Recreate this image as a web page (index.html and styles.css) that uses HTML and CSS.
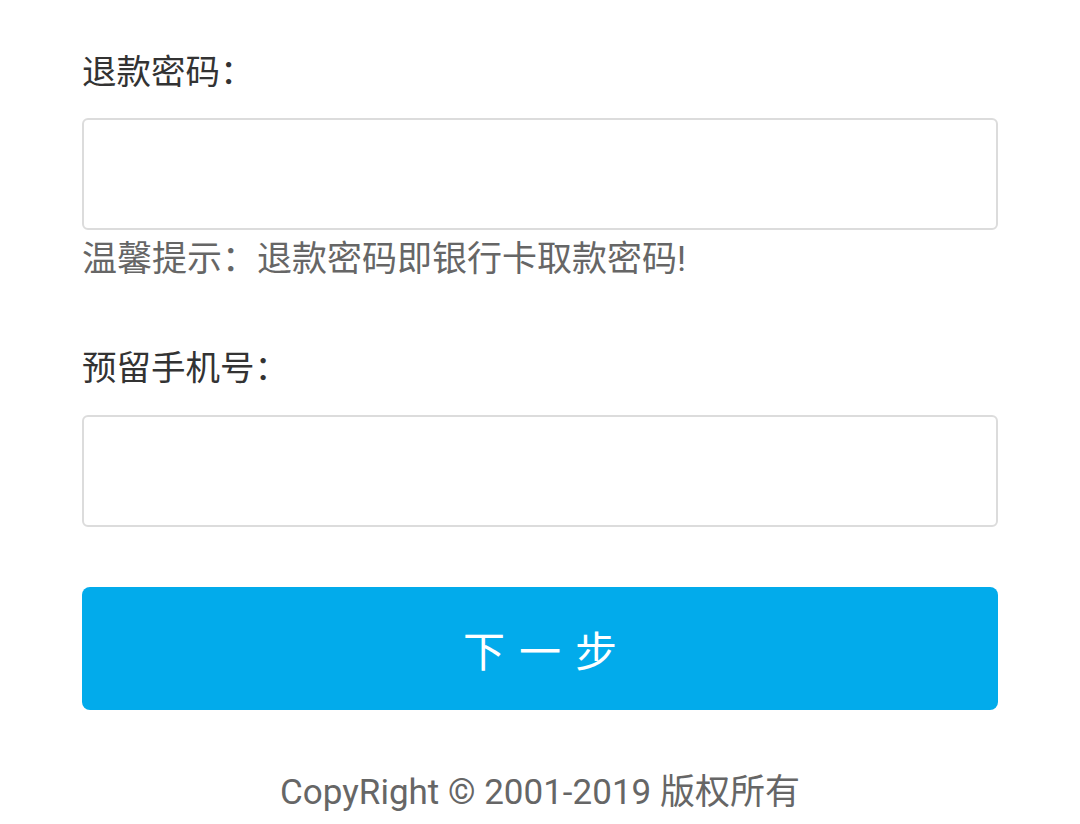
FILE: index.html
```html
<!DOCTYPE html>
<html lang="zh-CN">
<head>
<meta charset="utf-8">
<title>退款密码</title>
<link rel="stylesheet" href="styles.css">
</head>
<body>
<main class="form">
  <label class="label">退款密码：</label>
  <input class="field" type="password">
  <p class="hint">温馨提示：退款密码即银行卡取款密码!</p>
  <label class="label label-second">预留手机号：</label>
  <input class="field field-second" type="tel">
  <button class="next" type="button">下一步</button>
  <p class="copyright">CopyRight © 2001-2019 版权所有</p>
</main>
</body>
</html>
```

FILE: styles.css
```css
html, body {
  margin: 0;
  padding: 0;
  background: #ffffff;
}

body {
  font-family: Roboto, "Noto Sans CJK SC", "Noto Sans", sans-serif;
  color: #333333;
}

.form {
  display: flex;
  flex-direction: column;
  width: 916px;
  margin: 0 0 0 82px;
  padding-top: 48px;
}

.label {
  display: block;
  font-size: 34.5px;
  line-height: 48px;
  color: #333333;
}

.label-second {
  margin-top: 60px;
}

.field {
  box-sizing: border-box;
  display: block;
  width: 100%;
  height: 112px;
  margin: 22px 0 0;
  border: 2px solid #dcdcdc;
  border-radius: 6px;
  background: #ffffff;
  outline: none;
  font-size: 34px;
  padding: 0 16px;
}

.field-second {
  margin-top: 23px;
}

.hint {
  margin: 6px 0 0;
  font-size: 35px;
  line-height: 48px;
  color: #666666;
}

.next {
  display: block;
  width: 100%;
  height: 123px;
  margin-top: 60px;
  border: none;
  border-radius: 8px;
  background: #02abeb;
  color: #ffffff;
  font-family: Roboto, "Noto Sans CJK SC", sans-serif;
  font-size: 42px;
  letter-spacing: 14px;
  padding: 0 0 0 14px;
  cursor: pointer;
}

.copyright {
  margin: 59px 0 0;
  text-align: center;
  font-size: 35px;
  line-height: 48px;
  color: #666666;
}
```
